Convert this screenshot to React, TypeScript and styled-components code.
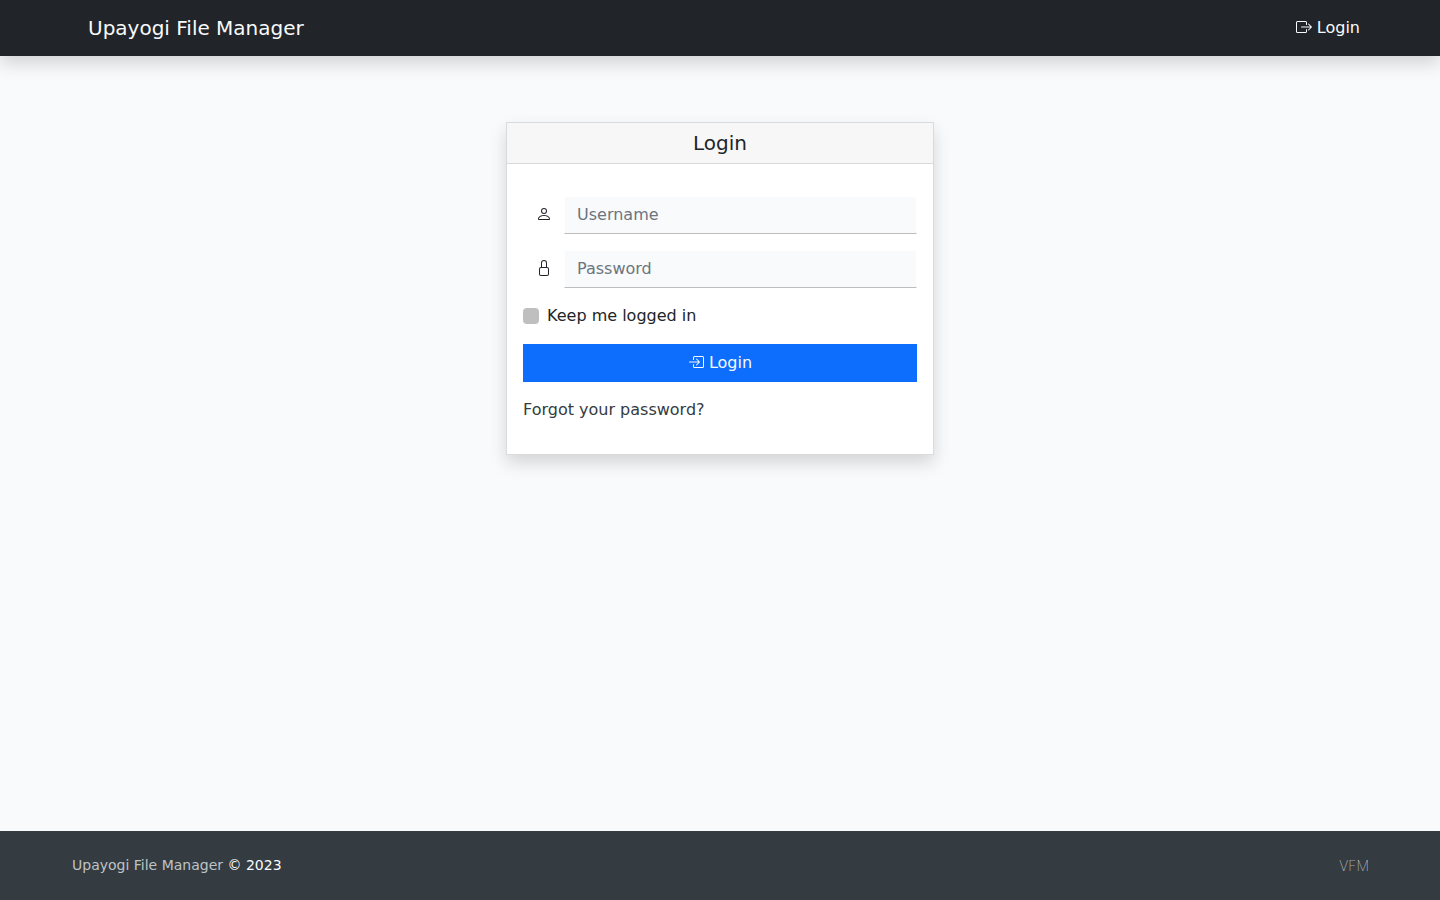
import React, { useState } from "react";
import styled, { createGlobalStyle } from "styled-components";
import { BsBoxArrowInRight, BsBoxArrowRight, BsLock, BsPerson } from "react-icons/bs";

const GlobalStyle = createGlobalStyle`
  *, *::before, *::after { box-sizing: border-box; }
  body {
    margin: 0;
    background: #f8fafc;
    color: #212529;
    font: 400 16px/24px "DejaVu Sans", sans-serif;
  }
  svg { display: block; margin-bottom: 2px; }
`;

const Page = styled.div`
  display: flex;
  flex-direction: column;
  min-height: 100vh;
`;

const Navbar = styled.nav`
  display: flex;
  align-items: center;
  justify-content: space-between;
  height: 56px;
  padding: 0 80px 0 88px;
  background: #212529;
  box-shadow: 0 8px 16px rgba(0, 0, 0, 0.15);
`;

const Brand = styled.a`
  color: #f8fafc;
  font-size: 20px;
  line-height: 30px;
  text-decoration: none;
`;

const NavLink = styled.a`
  display: flex;
  align-items: center;
  gap: 5px;
  color: #f8fafc;
  text-decoration: none;
`;

const Main = styled.main`
  flex: 1;
  padding: 66px 16px;
`;

const Card = styled.section`
  max-width: 428px;
  margin: 0 auto;
  border: 1px solid #dadbdc;
  background: #fff;
  box-shadow: 0 8px 16px rgba(0, 0, 0, 0.15);
`;

const CardHeader = styled.h1`
  margin: 0;
  padding: 8px 16px;
  border-bottom: 1px solid #d8d8d8;
  background: #f7f7f7;
  font-size: 20px;
  font-weight: 400;
  line-height: 24px;
  text-align: center;
`;

const Form = styled.form`
  display: flex;
  flex-direction: column;
  gap: 16px;
  padding: 32px 16px;
`;

const Field = styled.div`
  display: flex;
`;

const FieldIcon = styled.label`
  display: flex;
  align-items: center;
  padding: 0 12px 0 13px;
`;

const Input = styled.input`
  flex: 1;
  min-width: 0;
  height: 38px;
  padding: 5px 12px 7px;
  border: 1px solid #fff;
  border-bottom-color: #bdbdbd;
  border-radius: 0;
  background: #f8fafc;
  color: #212529;
  font: inherit;
  &::placeholder { color: #6c757d; opacity: 1; }
  &:focus { outline: 0; border-bottom-color: #0d6efd; }
`;

const Remember = styled.label`
  display: flex;
  align-items: center;
  align-self: flex-start;
  gap: 8px;
`;

const Checkbox = styled.input`
  appearance: none;
  width: 16px;
  height: 16px;
  margin: 0;
  border-radius: 4px;
  background: #bfbfbf;
  &:checked { background: #0d6efd; }
`;

const SubmitButton = styled.button`
  display: flex;
  align-items: center;
  justify-content: center;
  gap: 5px;
  height: 38px;
  border: 0;
  background: #0d6efd;
  color: #f8fafc;
  font: inherit;
  cursor: pointer;
`;

const ForgotLink = styled.a`
  align-self: flex-start;
  color: #343b41;
  text-decoration: none;
`;

const Footer = styled.footer`
  display: flex;
  align-items: center;
  justify-content: space-between;
  padding: 24px 71px 24px 72px;
  background: #343b41;
  color: #f8fafc;
  font-size: 14px;
  line-height: 21px;
`;

const FooterLink = styled.a`
  color: #bfc3c6;
  text-decoration: none;
`;

const Credit = styled.a`
  color: #ffffff;
  font-family: Inter, sans-serif;
  font-weight: 100;
  text-decoration: none;
`;

export default function App() {
  const [keep, setKeep] = useState(false);
  return (
    <Page>
      <GlobalStyle />
      <Navbar>
        <Brand href="#">Upayogi File Manager</Brand>
        <NavLink href="#login"><BsBoxArrowRight aria-hidden />Login</NavLink>
      </Navbar>
      <Main>
        <Card id="login">
          <CardHeader>Login</CardHeader>
          <Form onSubmit={(e) => e.preventDefault()}>
            <Field>
              <FieldIcon htmlFor="username"><BsPerson aria-hidden /></FieldIcon>
              <Input id="username" type="text" placeholder="Username" aria-label="Username" />
            </Field>
            <Field>
              <FieldIcon htmlFor="password"><BsLock aria-hidden /></FieldIcon>
              <Input id="password" type="password" placeholder="Password" aria-label="Password" />
            </Field>
            <Remember>
              <Checkbox type="checkbox" checked={keep} onChange={(e) => setKeep(e.target.checked)} />
              Keep me logged in
            </Remember>
            <SubmitButton type="submit"><BsBoxArrowInRight aria-hidden />Login</SubmitButton>
            <ForgotLink href="#reset">Forgot your password?</ForgotLink>
          </Form>
        </Card>
      </Main>
      <Footer>
        <span><FooterLink href="#">Upayogi File Manager</FooterLink> © 2023</span>
        <Credit href="#vfm">VFM</Credit>
      </Footer>
    </Page>
  );
}
